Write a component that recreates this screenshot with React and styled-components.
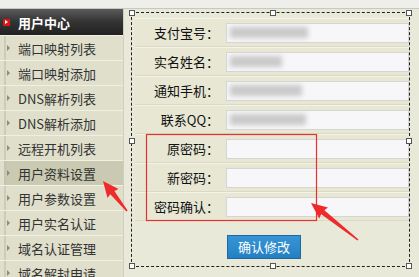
import React from "react";
import styled, { createGlobalStyle } from "styled-components";

const GlobalStyle = createGlobalStyle`
  html, body {
    margin: 0;
    padding: 0;
    width: 419px;
    height: 277px;
    overflow: hidden;
    background: #e9e9d9;
    font-family: "Noto Sans CJK SC", "Liberation Sans", sans-serif;
  }
`;

const menu = [
  "端口映射列表",
  "端口映射添加",
  "DNS解析列表",
  "DNS解析添加",
  "远程开机列表",
  "用户资料设置",
  "用户参数设置",
  "用户实名认证",
  "域名认证管理",
  "域名解封申请",
];

const fields = [
  { label: "支付宝号：", blur: 78 },
  { label: "实名姓名：", blur: 52 },
  { label: "通知手机：", blur: 72 },
  { label: "联系QQ：", blur: 76 },
  { label: "原密码：" },
  { label: "新密码：" },
  { label: "密码确认：" },
];

function arrow(tx, ty, hx, hy) {
  const dx = hx - tx;
  const dy = hy - ty;
  const len = Math.hypot(dx, dy);
  const ux = dx / len;
  const uy = dy / len;
  const px = -uy;
  const py = ux;
  const head = 15;
  const bx = hx - ux * head;
  const by = hy - uy * head;
  const pt = (x, y, w) => [x + px * w, y + py * w, x - px * w, y - py * w];
  const [t1x, t1y, t2x, t2y] = pt(tx, ty, 0.8);
  const [s1x, s1y, s2x, s2y] = pt(bx, by, 2.6);
  const [h1x, h1y, h2x, h2y] = pt(bx - ux * 1, by - uy * 1, 7);
  return [
    [t1x, t1y],
    [s1x, s1y],
    [h1x, h1y],
    [hx, hy],
    [h2x, h2y],
    [s2x, s2y],
    [t2x, t2y],
  ]
    .map((p) => p.map((v) => v.toFixed(1)).join(","))
    .join(" ");
}

export default function App() {
  return (
    <Page>
      <GlobalStyle />
      <TopStrip />
      <Body>
        <Sidebar>
          <Header>
            <HeadIcon />
            用户中心
          </Header>
          {menu.map((m) => (
            <Item key={m} $active={m === "用户资料设置"}>
              <Bullet />
              {m}
            </Item>
          ))}
        </Sidebar>

        <Main>
          <Panel>
            <Handle style={{ left: -3, top: -3 }} />
            <Handle style={{ left: 138, top: -3 }} />
            <Handle style={{ right: -3, top: -3 }} />
            <Handle style={{ left: -3, top: 125 }} />
            <Handle style={{ right: -3, top: 125 }} />
            <Handle style={{ left: -3, bottom: -3 }} />
            <Handle style={{ left: 138, bottom: -3 }} />
            <Handle style={{ right: -3, bottom: -3 }} />

            <Form>
              {fields.map((f) => (
                <Row key={f.label}>
                  <Label>{f.label}</Label>
                  <Input>{f.blur && <Smudge $w={f.blur} />}</Input>
                </Row>
              ))}
            </Form>

            <Actions>
              <Button>确认修改</Button>
            </Actions>
          </Panel>
        </Main>
      </Body>

      <Arrows viewBox="0 0 419 277">
        <rect x="146.5" y="134.5" width="170" height="86" fill="none" stroke="#e8302c" strokeWidth="1.2" />
        <polygon points={arrow(127, 211, 103, 181)} fill="#ee2a2a" />
        <polygon points={arrow(358, 240, 311, 203)} fill="#ee2a2a" />
      </Arrows>
    </Page>
  );
}

const Page = styled.div`
  position: relative;
  width: 419px;
  height: 277px;
  overflow: hidden;
  display: flex;
  flex-direction: column;
`;

const TopStrip = styled.div`
  height: 8px;
  flex: none;
  background: #eeeeea;
  border-bottom: 1px solid #c8c8c0;
`;

const Body = styled.div`
  flex: 1;
  display: flex;
  min-height: 0;
`;

const Sidebar = styled.div`
  width: 123px;
  flex: none;
  background: #dfdfcb;
  border-right: 1px solid #cfcfbd;
  overflow: hidden;
`;

const Header = styled.div`
  height: 26px;
  display: flex;
  align-items: center;
  gap: 8px;
  padding-left: 3px;
  color: #fff;
  font-size: 13px;
  font-weight: bold;
  background: linear-gradient(#5a5a5a, #333 50%, #222);
`;

const HeadIcon = styled.span`
  width: 7px;
  height: 7px;
  background: #d81818;
  position: relative;
  &::after {
    content: "";
    position: absolute;
    left: 2px;
    top: 1px;
    border-left: 3px solid #fff;
    border-top: 2.5px solid transparent;
    border-bottom: 2.5px solid transparent;
  }
`;

const Item = styled.div`
  height: 24px;
  display: flex;
  align-items: center;
  gap: 8px;
  padding-left: 7px;
  font-size: 13px;
  color: #333;
  border-top: 1px solid #efefe2;
  background: ${(p) =>
    p.$active
      ? "linear-gradient(90deg, #dfdfcb 4px, #c4c4b6 4px, #c4c4b6 6px, #cacab2 6px)"
      : "linear-gradient(90deg, #dfdfcb 4px, #cbcbc0 4px, #cbcbc0 6px, #dfdfcb 6px)"};
`;

const Bullet = styled.span`
  width: 0;
  height: 0;
  border-left: 3px solid #8d8d72;
  border-top: 3px solid transparent;
  border-bottom: 3px solid transparent;
`;

const Main = styled.div`
  flex: 1;
  padding: 3px 0 0 7px;
  background: #e9e9d9;
`;

const Panel = styled.div`
  position: relative;
  width: 279px;
  height: 255px;
  border: 1px dashed #222;
  padding: 5px 0 0 3px;
  box-sizing: border-box;
`;

const Handle = styled.span`
  position: absolute;
  width: 4px;
  height: 4px;
  background: #fff;
  border: 1px solid #555;
`;

const Form = styled.div`
  display: flex;
  flex-direction: column;
`;

const Row = styled.div`
  height: 27px;
  display: flex;
  align-items: center;
  border-top: 1px solid #f3f3e8;
  border-bottom: 1px solid #d9d9c6;
  background: #e7e7d4;
`;

const Label = styled.div`
  width: 85px;
  padding-right: 7px;
  text-align: right;
  font-size: 13px;
  color: #111;
`;

const Input = styled.div`
  width: 180px;
  height: 18px;
  border: 1px solid #d5d5d5;
  background: #f7f7fa;
  display: flex;
  align-items: center;
  padding-left: 3px;
  overflow: hidden;
`;

const Smudge = styled.span`
  width: ${(p) => p.$w}px;
  height: 11px;
  background: #c9c9c9;
  filter: blur(2.5px);
`;

const Actions = styled.div`
  padding: 14px 0 0 92px;
`;

const Button = styled.div`
  width: 72px;
  height: 22px;
  line-height: 22px;
  text-align: center;
  font-size: 13px;
  color: #fff;
  background: linear-gradient(#3695d6, #2580c2);
  border: 1px solid #1d68a0;
`;

const Arrows = styled.svg`
  position: absolute;
  left: 0;
  top: 0;
  width: 419px;
  height: 277px;
  pointer-events: none;
`;
